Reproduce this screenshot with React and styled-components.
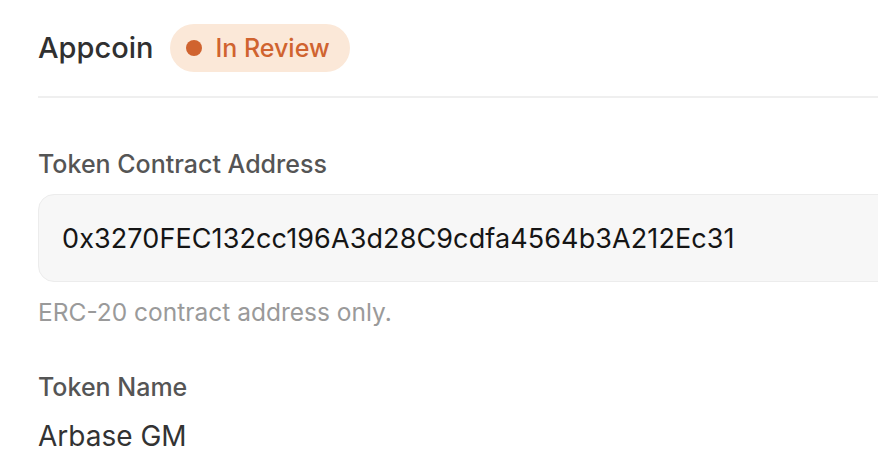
import React from 'react'
import styled, { createGlobalStyle } from 'styled-components'

const GlobalStyle = createGlobalStyle`
  html, body {
    margin: 0;
    padding: 0;
    background: #ffffff;
    overflow: hidden;
  }
  body {
    font-family: Inter, "Open Sans", sans-serif;
  }
`

const Page = styled.div`
  width: 900px;
  padding: 24px 0 0 38px;
  box-sizing: border-box;
`

const Header = styled.div`
  display: flex;
  align-items: center;
  gap: 17px;
  height: 48px;
`

const Title = styled.h1`
  margin: 0;
  font-size: 29px;
  font-weight: 500;
  line-height: 34px;
  color: #303030;
`

const Badge = styled.span`
  display: inline-flex;
  align-items: center;
  gap: 13px;
  height: 48px;
  padding: 0 20px 0 16px;
  border-radius: 24px;
  background: #fbe8d8;
  color: #d0632f;
  font-size: 25px;
  font-weight: 500;
`

const Dot = styled.span`
  width: 16px;
  height: 16px;
  border-radius: 50%;
  background: #d0632f;
`

const Divider = styled.hr`
  margin: 24px 0 0;
  border: 0;
  height: 2px;
  background: #efefef;
`

const Field = styled.div`
  display: flex;
  flex-direction: column;
  margin-top: ${p => p.$top}px;
`

const Label = styled.label`
  font-size: 25px;
  font-weight: 500;
  line-height: 30px;
  color: #555555;
`

const Input = styled.div`
  box-sizing: border-box;
  margin-top: 15px;
  height: 88px;
  display: flex;
  align-items: center;
  padding-left: 23px;
  border: 1px solid #ececec;
  border-radius: 16px;
  background: #f7f7f7;
  font-size: 27px;
  letter-spacing: 0.1px;
  color: #151515;
`

const Hint = styled.div`
  margin-top: 15px;
  font-size: 24.5px;
  line-height: 30px;
  color: #9a9a9a;
`

const Value = styled.div`
  margin-top: 17px;
  font-size: 28px;
  line-height: 34px;
  color: #333333;
`

export default function App () {
  return (
    <>
      <GlobalStyle />
      <Page>
        <Header>
          <Title>Appcoin</Title>
          <Badge><Dot />In Review</Badge>
        </Header>
        <Divider />
        <Field $top={51}>
          <Label>Token Contract Address</Label>
          <Input>0x3270FEC132cc196A3d28C9cdfa4564b3A212Ec31</Input>
          <Hint>ERC-20 contract address only.</Hint>
        </Field>
        <Field $top={45}>
          <Label>Token Name</Label>
          <Value>Arbase GM</Value>
        </Field>
      </Page>
    </>
  )
}
